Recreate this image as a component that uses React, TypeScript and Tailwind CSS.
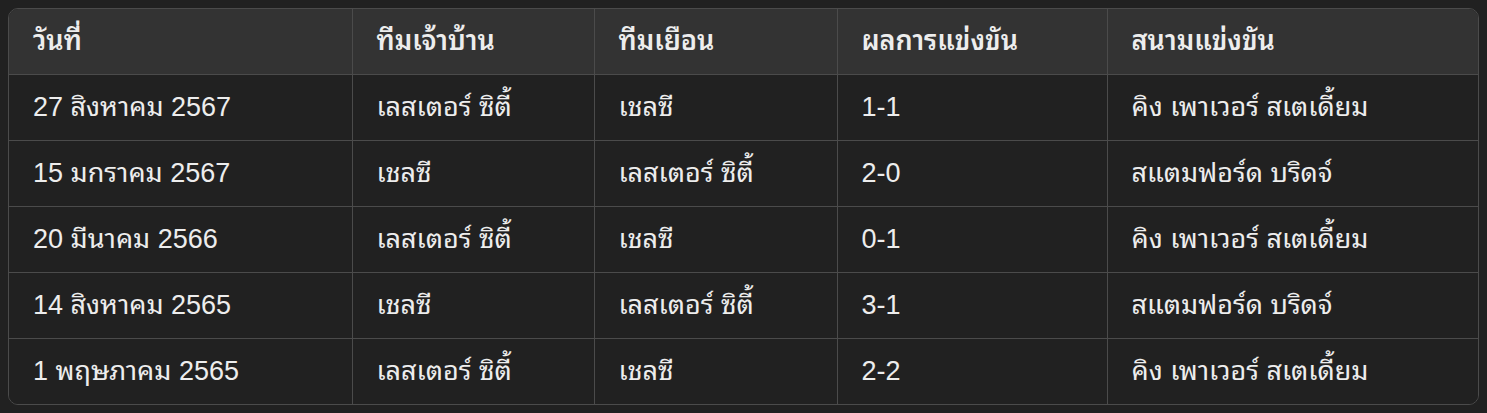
const headers = ["วันที่", "ทีมเจ้าบ้าน", "ทีมเยือน", "ผลการแข่งขัน", "สนามแข่งขัน"];

const rows = [
  ["27 สิงหาคม 2567", "เลสเตอร์ ซิตี้", "เชลซี", "1-1", "คิง เพาเวอร์ สเตเดี้ยม"],
  ["15 มกราคม 2567", "เชลซี", "เลสเตอร์ ซิตี้", "2-0", "สแตมฟอร์ด บริดจ์"],
  ["20 มีนาคม 2566", "เลสเตอร์ ซิตี้", "เชลซี", "0-1", "คิง เพาเวอร์ สเตเดี้ยม"],
  ["14 สิงหาคม 2565", "เชลซี", "เลสเตอร์ ซิตี้", "3-1", "สแตมฟอร์ด บริดจ์"],
  ["1 พฤษภาคม 2565", "เลสเตอร์ ซิตี้", "เชลซี", "2-2", "คิง เพาเวอร์ สเตเดี้ยม"],
];

const widths = ["w-[343px]", "w-[242px]", "w-[243px]", "w-[270px]", "w-auto"];

export default function App() {
  return (
    <div
      className="min-h-screen bg-[#212121] p-2"
      style={{
        fontFamily:
          '"Liberation Sans", "Noto Sans Thai Looped", "Garuda", "Loma", "Sarabun", "Noto Sans Thai", sans-serif',
      }}
    >
      <div className="overflow-hidden rounded-[10px] border border-[#4b4b4b]">
        <table className="w-full border-collapse text-[27px] text-[#ededed]">
          <thead>
            <tr className="h-[65px] bg-[#333333]">
              {headers.map((h, i) => (
                <th
                  key={h}
                  className={`${widths[i]} border-b border-[#4b4b4b] px-6 text-left font-semibold ${i > 0 ? "border-l" : ""}`}
                >
                  {h}
                </th>
              ))}
            </tr>
          </thead>
          <tbody>
            {rows.map((r, ri) => (
              <tr key={ri} className="h-[66px] bg-[#212121]">
                {r.map((c, ci) => (
                  <td
                    key={ci}
                    className={`border-[#4b4b4b] px-6 ${ri < rows.length - 1 ? "border-b" : ""} ${ci > 0 ? "border-l" : ""}`}
                  >
                    {c}
                  </td>
                ))}
              </tr>
            ))}
          </tbody>
        </table>
      </div>
    </div>
  );
}
